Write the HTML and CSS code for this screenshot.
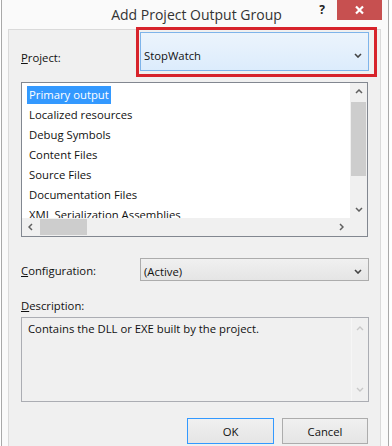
FILE: index.html
```html
<!DOCTYPE html>
<html>
<head>
<meta charset="utf-8">
<link rel="stylesheet" href="styles.css">
</head>
<body>
<div class="window">
  <div class="titlebar">
    <div></div>
    <div class="title">Add Project Output Group</div>
    <div class="caption">
      <span class="help">?</span>
      <span class="close"><svg width="11" height="10" viewBox="0 0 11 10"><path d="M2 1.5 L9 8.5 M9 1.5 L2 8.5" stroke="#fff" stroke-width="2.2" fill="none"/></svg></span>
    </div>
  </div>
  <div class="client">
    <div class="project-row">
      <div class="label proj-label"><u>P</u>roject:</div>
      <div class="highlight">
        <div class="combo focused">
          <span>StopWatch</span>
          <svg class="chev" width="8" height="5" viewBox="0 0 8 5"><path d="M1 1 L4 4 L7 1" stroke="#444" stroke-width="1.6" fill="none"/></svg>
        </div>
      </div>
    </div>

    <div class="listbox">
      <div class="items">
        <span class="item selected">Primary output</span>
        <span class="item">Localized resources</span>
        <span class="item">Debug Symbols</span>
        <span class="item">Content Files</span>
        <span class="item">Source Files</span>
        <span class="item">Documentation Files</span>
        <span class="item">XML Serialization Assemblies</span>
      </div>
      <div class="vscroll">
        <div class="arrow"><svg width="8" height="5" viewBox="0 0 8 5"><path d="M1 4 L4 1 L7 4" stroke="#606060" stroke-width="1.5" fill="none"/></svg></div>
        <div class="vtrack"><div class="vthumb"></div></div>
        <div class="arrow"><svg width="8" height="5" viewBox="0 0 8 5"><path d="M1 1 L4 4 L7 1" stroke="#606060" stroke-width="1.5" fill="none"/></svg></div>
      </div>
      <div class="hscroll">
        <div class="harrow"><svg width="5" height="8" viewBox="0 0 5 8"><path d="M4 1 L1 4 L4 7" stroke="#606060" stroke-width="1.5" fill="none"/></svg></div>
        <div class="htrack"><div class="hthumb"></div></div>
        <div class="harrow"><svg width="5" height="8" viewBox="0 0 5 8"><path d="M1 1 L4 4 L1 7" stroke="#606060" stroke-width="1.5" fill="none"/></svg></div>
      </div>
      <div class="corner"></div>
    </div>

    <div class="config-row">
      <div class="label cfg-label"><u>C</u>onfiguration:</div>
      <div class="combo normal">
        <span>(Active)</span>
        <svg class="chev" width="8" height="5" viewBox="0 0 8 5"><path d="M1 1 L4 4 L7 1" stroke="#444" stroke-width="1.6" fill="none"/></svg>
      </div>
    </div>

    <div class="desc-label"><u>D</u>escription:</div>
    <div class="desc-box">
      <div class="desc-text">Contains the DLL or EXE built by the project.</div>
      <div class="desc-scroll">
        <div class="arrow"><svg width="8" height="5" viewBox="0 0 8 5"><path d="M1 4 L4 1 L7 4" stroke="#c8c8c8" stroke-width="1.4" fill="none"/></svg></div>
        <div class="arrow"><svg width="8" height="5" viewBox="0 0 8 5"><path d="M1 1 L4 4 L7 1" stroke="#c8c8c8" stroke-width="1.4" fill="none"/></svg></div>
      </div>
    </div>

    <div class="buttons">
      <button class="btn ok">OK</button>
      <button class="btn cancel">Cancel</button>
    </div>
  </div>
</div>
</body>
</html>
```

FILE: styles.css
```css
* { box-sizing: border-box; }
html, body { margin: 0; padding: 0; }
body {
  background: #fff;
  font-family: "Open Sans", "Noto Sans", sans-serif;
  font-size: 11.3px;
  color: #111;
  width: 392px;
  height: 446px;
  overflow: hidden;
}
.window {
  margin-left: 1px;
  width: 388px;
  height: 446px;
  border-left: 1px solid #a9a9a9;
  border-right: 1px solid #a9a9a9;
  background: #fafafa;
  display: flex;
  flex-direction: column;
}
.titlebar {
  height: 29px;
  flex: none;
  display: grid;
  grid-template-columns: 1fr auto 1fr;
  align-items: start;
}
.title {
  font-size: 14px;
  color: #333;
  line-height: 29px;
  padding-left: 3px;
  white-space: nowrap;
}
.caption {
  justify-self: end;
  display: flex;
  margin-right: 6px;
}
.help {
  width: 28px;
  height: 20px;
  font-weight: bold;
  font-size: 12px;
  color: #222;
  text-align: center;
  line-height: 20px;
  margin-right: 1px;
}
.close {
  width: 45px;
  height: 20px;
  background: #c75050;
  display: flex;
  align-items: center;
  justify-content: center;
}
.client {
  flex: 1;
  margin: 0 7px 0 6px;
  border: 1px solid #dadada;
  border-bottom: none;
  background: #f0f0f0;
  padding: 0 11px 0 12px;
  display: flex;
  flex-direction: column;
}
.label { white-space: nowrap; line-height: 16px; }
.project-row {
  display: flex;
  align-items: flex-start;
  margin-top: -3px;
}
.proj-label { width: 115px; margin-top: 23px; }
.highlight {
  border: 3px solid #d7232b;
  padding: 2px 5px 3px 1px;
  margin-right: -8px;
}
.combo {
  display: flex;
  align-items: center;
  justify-content: space-between;
  width: 229px;
  padding: 0 6px 0 3px;
}
.combo.focused {
  height: 39px;
  background: linear-gradient(#ecf4fc, #dcecfc);
  border: 1px solid #7eb4ea;
  padding-top: 8px;
}
.combo.normal {
  height: 23px;
  background: linear-gradient(#f0f0f0, #e5e5e5);
  border: 1px solid #acacac;
  padding-top: 3px;
}
.chev { flex: none; }

.listbox {
  margin-top: 5px;
  margin-right: 1px;
  height: 155px;
  flex: none;
  border: 1px solid #828790;
  background: #fff;
  display: grid;
  grid-template-columns: 1fr 17px;
  grid-template-rows: 1fr 18px;
}
.items {
  overflow: hidden;
  padding: 3px 0 0 5px;
  display: flex;
  flex-direction: column;
  gap: 2px;
}
.item {
  height: 18px;
  line-height: 18px;
  padding: 0 2px;
  align-self: flex-start;
  white-space: nowrap;
  flex: none;
}
.item.selected { background: #3399ff; color: #fff; }
.vscroll {
  background: #f0f0f0;
  display: flex;
  flex-direction: column;
}
.arrow {
  height: 17px;
  flex: none;
  display: flex;
  align-items: center;
  justify-content: center;
}
.vtrack { flex: 1; padding-top: 2px; }
.vthumb { height: 74px; background: #cdcdcd; margin: 0 1px; }
.hscroll {
  background: #f0f0f0;
  display: flex;
}
.harrow {
  width: 17px;
  flex: none;
  display: flex;
  align-items: center;
  justify-content: center;
}
.htrack { flex: 1; padding: 1px 0 1px 1px; }
.hthumb { width: 47px; height: 100%; background: #cdcdcd; }
.corner { background: #f0f0f0; }

.config-row {
  display: flex;
  align-items: center;
  margin-top: 21px;
}
.cfg-label { width: 119px; padding-top: 3px; }

.desc-label { margin-top: 17px; line-height: 15px; }
.desc-box {
  margin-top: 4px;
  height: 85px;
  flex: none;
  border: 1px solid #abadb3;
  background: #f0f0f0;
  display: flex;
}
.desc-text { flex: 1; padding: 3px 0 0 6px; line-height: 16px; }
.desc-scroll {
  width: 17px;
  display: flex;
  flex-direction: column;
  justify-content: space-between;
  padding: 2px 0 3px;
  border-left: 1px solid #f6f6f6;
}

.buttons {
  margin-top: 16px;
  margin-right: 1px;
  display: flex;
  justify-content: flex-end;
  gap: 8px;
}
.btn {
  height: 26px;
  font: inherit;
  color: #111;
  background: linear-gradient(#f0f0f0, #e5e5e5);
  border: 1px solid #acacac;
  padding: 0;
}
.btn.ok { width: 87px; border-color: #3399ff; }
.btn.cancel { width: 86px; }
```
